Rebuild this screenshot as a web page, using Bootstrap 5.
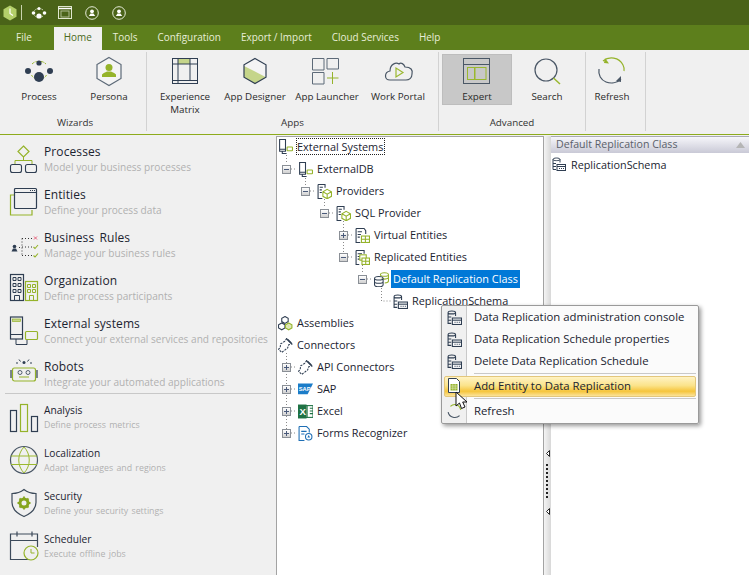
<!DOCTYPE html>
<html lang="en">
<head>
<meta charset="utf-8">
<title>Bizagi Studio</title>
<link href="https://cdn.jsdelivr.net/npm/bootstrap@5.3.0/dist/css/bootstrap.min.css" rel="stylesheet">
<script src="https://cdn.jsdelivr.net/npm/bootstrap@5.3.0/dist/js/bootstrap.bundle.min.js"></script>
<style>
html,body{height:100%;overflow:hidden;}
body{font-family:"Open Sans","Noto Sans",sans-serif;font-size:11px;background:#f0f0f0;color:#222;}
svg{display:block;flex:none;overflow:visible;}
.app-shell{width:749px;height:575px;position:relative;overflow:hidden;}
.title-strip{height:25px;background:#4a6318;padding-left:3px;}
.title-sep{width:1px;height:15px;background:#c9d3ae;margin-left:4px;}
.ti-a{margin-left:9px;}
.ti-b{margin-left:11px;}
.ti-c{margin-left:13px;}
.tab-strip{height:25px;background:#5d7f1c;padding-left:6px;}
.tab-link{display:block;padding:5px 10px 0;height:24px;line-height:14px;color:#e8eed8;font-size:9.95px;text-decoration:none;}
.tab-first{margin-right:12px;}
.tab-home{background:#f0f0f0;color:#4b6a1c;margin-top:2px;height:23px;padding-top:3px;}
.tab-tools{margin-left:1px;}
.ribbon-bar{height:84px;background:#f0f0f0;padding-left:4px;}
.ribbon-group{height:79px;margin-top:2px;border-right:1px solid #d2d2d2;position:relative;}
.ribbon-wiz{width:143px;}
.ribbon-apps{width:292px;padding-left:3px;}
.ribbon-adv{width:147px;padding-left:3px;}
.ribbon-ref{width:60px;padding-left:2px;}
.ribbon-btn{width:70px;height:51px;margin-top:2px;padding-top:2px;text-align:center;font-size:9.8px;line-height:13px;color:#2a2a2a;}
.ribbon-btn svg{margin:0 auto 2px;}
.ribbon-narrow{width:48px;}
.ribbon-on{background:#c8c8c8;border:1px solid #bdbdbd;padding-top:1px;}
.shift-1{margin-left:1px;}
.shift-2{margin-left:2px;}
.group-name{position:absolute;left:0;right:0;bottom:1px;text-align:center;font-size:9.8px;line-height:14px;color:#333;}
.accent-line{height:1px;background:#8dab1c;}
.work-area{height:440px;}
.side-nav{width:276px;padding-top:6px;background:#f0f0f0;}
.side-item{height:43px;padding:3px 0 0 9px;gap:5px;}
.side-title{font-size:12px;line-height:16px;color:#1c2430;letter-spacing:.1px;white-space:nowrap;}
.title-wide{word-spacing:2px;}
.side-sub{font-size:10.1px;line-height:14px;color:#b1b1b1;white-space:nowrap;}
.side-last{height:37px;}
.side-rule{height:1px;background:#c8c8c8;margin:0 5px 5px 5px;}
.side-minor .side-title{font-size:10.2px;letter-spacing:0;}
.side-minor .side-sub{font-size:8.8px;word-spacing:1px;}
.tree-box{width:268px;margin-top:1px;background:#fff;border:1px solid #a3a3a3;border-bottom:0;position:relative;}
.link-layer{position:absolute;left:-1px;top:-1px;}
.tree-line{position:relative;height:22px;font-size:10.9px;color:#1a2330;white-space:nowrap;}
.tree-top{height:18px;margin-bottom:3px;}
.lvl-0{padding-left:1px;}
.lvl-1{padding-left:5px;}
.lvl-2{padding-left:24px;}
.lvl-3{padding-left:43px;}
.lvl-4{padding-left:62px;}
.lvl-5{padding-left:81px;}
.lvl-6{padding-left:100px;}
.exp-box{width:9px;height:9px;margin-right:7px;flex:none;border:1px solid #8a8f96;background:linear-gradient(#fff,#d0d0d0);position:relative;}
.exp-box::before{content:"";position:absolute;left:1px;right:1px;top:3px;height:1px;background:#4a5a7a;}
.exp-plus::after{content:"";position:absolute;top:1px;bottom:1px;left:3px;width:1px;background:#4a5a7a;}
.exp-none{visibility:hidden;}
.tree-text{padding:0 2px;margin-left:2px;line-height:18px;}
.tree-focus{border:1px dotted #222;line-height:15px;height:17px;margin-left:3px;padding:0 1px 0 0;}
.tree-sel{background:#0078d7;color:#fff;}
.split-bar{width:7px;margin-top:1px;background:linear-gradient(90deg,#f4f4f4,#d8d8d8);position:relative;}
.split-mark{position:absolute;left:2px;}
.split-a{top:314px;}
.split-b{top:372px;}
.split-dots{position:absolute;left:2px;top:328px;width:2px;height:36px;background:repeating-linear-gradient(#222 0 2px,transparent 2px 4px);}
.detail-pane{flex:1;margin-top:1px;background:#fff;}
.detail-head{height:17px;padding:0 4px 0 5px;background:linear-gradient(#f6f6fa,#c9c9d6);color:#5a5f6a;font-size:10.6px;border-top:1px solid #a9a9b5;}
.detail-line{height:20px;padding:3px 0 0 1px;gap:5px;font-size:10.8px;color:#1a2330;margin-top:1px;}
.menu-pop{position:absolute;display:block;left:441px;top:305px;width:258px;height:119px;min-width:0;padding:0 2px;margin:0;border:1px solid #9a9a9a;border-radius:2px;font-size:11.35px;color:#1a2330;box-shadow:2px 2px 4px rgba(0,0,0,.4);background:linear-gradient(90deg,#f0f0f0 24px,#c9c9c9 24px,#c9c9c9 25px,#fbfbfb 25px);}
.menu-line{height:22px;padding:0 0 0 3px;color:#1a2330;}
.menu-icon{width:27px;flex:none;}
.menu-rule{height:1px;margin:1px 0 2px 30px;background:#c9c9c9;opacity:1;border:0;}
.menu-rule-b{margin-bottom:1px;}
.menu-hot{height:21px;background:linear-gradient(#fff3c4,#fbe38a 45%,#f6c53c 75%,#fbe39a);border:1px solid #e3c77c;border-radius:2px;padding:0 0 2px 2px;}
.cursor-mark{position:absolute;left:455px;top:391px;z-index:1001;}
</style>
</head>
<body>
<svg width="0" height="0" class="position-absolute">
<defs>
<symbol id="sys" viewBox="0 0 14 14"><path d="M1.500.5h5.500v11H1.500zM2 9.500h4.500M4 11.500v2h4" fill="none" stroke="#2f3e52"/><rect x="8.500" y="7.500" width="5" height="3.500" rx=".5" fill="#fff" stroke="#95b32a"/></symbol>
<symbol id="sch" viewBox="0 0 14 14"><path d="M1 2.500c0-2 7-2 7 0M1 2.500v10h3M8 2.500v3M1 2.500c0 1.500 7 1.500 7 0M1 6.500h3M1 9.500h3" fill="none" stroke="#2f3e52"/><rect x="5" y="7.500" width="8.500" height="6" fill="#fff" stroke="#2f3e52"/><path d="M5 9.500h8.500" stroke="#2f3e52"/><path d="M7 11.500h5" stroke="#2f3e52" stroke-dasharray="1 1"/></symbol>
<symbol id="prv" viewBox="0 0 14 14"><path d="M1 .5h6.500v3M1 .5v13h4M2.500 3h3M2.500 5.500h2M2.500 8h2" fill="none" stroke="#2f3e52"/><path d="M9.500 5l4 2.200v4.300l-4 2.300-4-2.300V7.200zM5.500 7.200l4 2.300 4-2.300M9.500 9.500v4.300" fill="#fff" stroke="#95b32a"/></symbol>
<symbol id="ent" viewBox="0 0 14 14"><path d="M1 .5h7.500l1.500 2v3M1 .5v13h4M2.500 3.500h4M2.500 6h3M2.500 8.500h2" fill="none" stroke="#2f3e52"/><rect x="6" y="7.500" width="7.500" height="6" fill="#fff" stroke="#95b32a"/><path d="M6 10.500h7.500M9.700 7.500v6" stroke="#95b32a"/></symbol>
<symbol id="rep" viewBox="0 0 14 14"><path d="M1 .5h7.500v3M1 .5v13h3M2.500 3.500h4M2.500 6h2M2.500 8.500h2" fill="none" stroke="#2f3e52"/><rect x="4.500" y="4.500" width="6" height="5" fill="#fff" stroke="#95b32a"/><rect x="6.500" y="7.500" width="7" height="6" fill="#fff" stroke="#95b32a"/><path d="M6.500 10.500h7M10 7.500v6" stroke="#95b32a"/></symbol>
<symbol id="cyl" viewBox="0 0 14 14"><path d="M6 2.500c0-2.500 7.500-2.500 7.500 0v6c0 1-1.500 1.600-3.500 1.800M6 2.500c0 2 7.500 2 7.500 0M6.500 5.500c2 1.300 5 1.300 7 0" fill="#fff" stroke="#95b32a"/><path d="M.5 6c0-2.500 8-2.500 8 0v6c0 2.500-8 2.500-8 0zM.5 6c0 2 8 2 8 0M.5 9c0 2 8 2 8 0" fill="#fff" stroke="#2f3e52"/></symbol>
<symbol id="asm" viewBox="0 0 14 14"><path d="M6.500.5l3 1.700v3l-3 1.700-3-1.700v-3zM3.500 6.500l3 1.700v3l-3 1.700-3-1.700v-3z" fill="#fff" stroke="#2f3e52"/><path d="M10 6.500l3 1.700v3l-3 1.700-3-1.700v-3z" fill="#dfe8b8" stroke="#95b32a"/><path d="M10 9.500h.1" stroke="#95b32a" stroke-width="2"/></symbol>
<symbol id="plg" viewBox="0 0 14 14"><path d="M8 .5l5 5-3 .8-1 3-4 3-1.500 1.200-3-3 1.500-1.500.5-3.500 4-2.500z" fill="#fff" stroke="#2f3e52" stroke-dasharray="2 1"/><path d="M9 1.500l3.500 3.500" stroke="#2f3e52" stroke-width="1.500"/></symbol>
<symbol id="sap" viewBox="0 0 14 14"><path d="M0 1.500h14l-5 10H0z" fill="#1b7cc8"/><text x=".6" y="8.500" font-size="5.400" font-weight="700" font-family="Liberation Sans,sans-serif" fill="#fff">SAP</text></symbol>
<symbol id="xls" viewBox="0 0 14 14"><rect x="5" y="1.500" width="9" height="11" fill="#fff" stroke="#1f7244"/><path d="M8.500 1.500v11M11 4h3M11 6.500h3M11 9h3" stroke="#1f7244"/><rect y=".5" width="8" height="13" fill="#1f7244"/><text x="1.300" y="10.300" font-size="9" font-weight="700" font-family="Liberation Sans,sans-serif" fill="#fff">X</text></symbol>
<symbol id="frm" viewBox="0 0 14 14"><path d="M1 .5h7l2.500 2.500v3M1 .5v13h5" fill="#fff" stroke="#1f6fb5"/><path d="M3 5h5M3 7.500h3" stroke="#1f6fb5"/><circle cx="10" cy="10" r="3" fill="#fff" stroke="#1f6fb5"/><path d="M10 8.500l1.300 2.300H8.700z" fill="#1f6fb5"/></symbol>
</defs>
</svg>

<div class="app-shell d-flex flex-column">
  <div class="title-strip d-flex align-items-center">
    <svg width="14" height="16" viewBox="0 0 14 16"><path d="M7 .5l6.500 3.700v7.600L7 15.500.5 11.800V4.200z" fill="#b4cf6a"/><path d="M7 3.500v5l3 2" fill="none" stroke="#fff" stroke-width="1.200"/></svg>
    <div class="title-sep"></div>
    <svg class="ti-a" width="16" height="12" viewBox="0 0 16 12"><path d="M3.500 3.500c2-2.500 7-2.500 9 0M3.500 8.500c2 2.500 7 2.500 9 0" fill="none" stroke="#dfe6cd" stroke-dasharray="1.500 1"/><circle cx="8" cy="1.500" r="1.500" fill="#fff"/><circle cx="2.500" cy="6" r="1.800" fill="#fff"/><circle cx="13.500" cy="6" r="1.800" fill="#fff"/><circle cx="8" cy="9" r="2.600" fill="#fff"/></svg>
    <svg class="ti-b" width="14" height="13" viewBox="0 0 14 13"><rect x=".5" y=".5" width="13" height="12" fill="none" stroke="#dfe6cd"/><path d="M.5 2.500h13" stroke="#fff" stroke-width="1.500"/><rect x="3" y="5" width="8" height="6" fill="none" stroke="#aebb90"/></svg>
    <svg class="ti-c" width="14" height="14" viewBox="0 0 14 14"><circle cx="7" cy="7" r="6.300" fill="none" stroke="#e6ecd8"/><circle cx="7" cy="5.300" r="1.900" fill="#fff"/><path d="M3.800 10h6.400L8.500 7.500h-3z" fill="#fff"/></svg>
    <svg class="ti-c" width="14" height="14" viewBox="0 0 14 14"><circle cx="7" cy="7" r="6.300" fill="none" stroke="#e6ecd8"/><circle cx="7" cy="5.300" r="1.900" fill="#fff"/><path d="M3.800 10h6.400L8.500 7.500h-3z" fill="#fff"/></svg>
  </div>

  <nav class="tab-strip nav flex-nowrap align-items-start">
    <a class="tab-link tab-first" href="#">File</a>
    <a class="tab-link tab-home" href="#">Home</a>
    <a class="tab-link tab-tools" href="#">Tools</a>
    <a class="tab-link" href="#">Configuration</a>
    <a class="tab-link" href="#">Export / Import</a>
    <a class="tab-link" href="#">Cloud Services</a>
    <a class="tab-link" href="#">Help</a>
  </nav>

  <div class="ribbon-bar d-flex">
    <div class="ribbon-group ribbon-wiz d-flex">
      <div class="ribbon-btn"><svg width="32" height="32" viewBox="0 0 32 32"><path d="M9 8c2-2 4-2.500 5-2.500M18 5.500c1 0 3 .5 5 2.500M8.500 19c1 2 2.500 3 4 3.500M23.500 19c-1 2-2.500 3-4 3.500" fill="none" stroke="#9ab82f" stroke-dasharray="3 1"/><circle cx="16" cy="7" r="2.600" fill="#2f3e52"/><circle cx="5" cy="15" r="3" fill="#2f3e52"/><circle cx="27" cy="15" r="3" fill="#2f3e52"/><circle cx="16" cy="21" r="5" fill="#2f3e52"/></svg>Process</div>
      <div class="ribbon-btn"><svg width="32" height="32" viewBox="0 0 32 32"><path d="M16 1.500l12 7v14l-12 7-12-7v-14z" fill="#f4f4f4" stroke="#5d6a78" stroke-width="1.200"/><circle cx="16" cy="11.500" r="3.500" fill="#95b32a"/><path d="M9 21h14v-2.500c-2-2-4-2.500-5-3h-4c-1 .5-3 1-5 3z" fill="#95b32a"/></svg>Persona</div>
      <div class="group-name">Wizards</div>
    </div>
    <div class="ribbon-group ribbon-apps d-flex">
      <div class="ribbon-btn"><svg width="32" height="32" viewBox="0 0 32 32"><rect x="3.500" y="2.500" width="25" height="25" fill="none" stroke="#2f3e52"/><rect x="9" y="3" width="12" height="5" fill="#c5d58a"/><path d="M3.500 8h25M3.500 24.500h25M9 2.500v25M21 2.500v22" fill="none" stroke="#2f3e52"/></svg>Experience Matrix</div>
      <div class="ribbon-btn"><svg width="32" height="32" viewBox="0 0 32 32"><path d="M16 2.500l11 6.300v12.400L16 27.500 5 21.200V8.800z" fill="#f4f4f4"/><path d="M5 10v11.200l11 6.300 11-6.300z" fill="#c5d58a"/><path d="M16 2.500l11 6.300v12.400L16 27.500 5 21.200V8.800z" fill="none" stroke="#2f3e52" stroke-width="1.200"/></svg>App Designer</div>
      <div class="ribbon-btn shift-2"><svg width="32" height="32" viewBox="0 0 32 32"><path d="M1.500 2.500h11.500v11.500H1.500zM16 2.500h11.500V13H16zM1.500 16.500h11.500V28H1.500z" fill="none" stroke="#5d6a78"/><path d="M21.500 16v12M16 22h11.500" stroke="#95b32a"/></svg>App Launcher</div>
      <div class="ribbon-btn shift-1"><svg width="32" height="32" viewBox="0 0 32 32"><path d="M8 24c-6 0-6-8 0-9 0-7 6-9 9-7 2-2 5 0 6 3 6 0 8 3 7 7 0 4-3 6-6 6z" fill="none" stroke="#4a5766" stroke-width="1.200"/><path d="M14 12v9l7-4.500z" fill="none" stroke="#9ab82f" stroke-width="1.200"/></svg>Work Portal</div>
      <div class="group-name">Apps</div>
    </div>
    <div class="ribbon-group ribbon-adv d-flex">
      <div class="ribbon-btn ribbon-on"><svg width="32" height="32" viewBox="0 0 32 32"><rect x="2.500" y="2.500" width="26" height="25" fill="none" stroke="#4a5766"/><path d="M2.500 8.500h26" stroke="#4a5766"/><rect x="6.500" y="11.500" width="7" height="12" fill="none" stroke="#9ab82f"/><rect x="14" y="11.500" width="11" height="12" fill="none" stroke="#9ab82f"/></svg>Expert</div>
      <div class="ribbon-btn"><svg width="32" height="32" viewBox="0 0 32 32"><circle cx="15" cy="14" r="11" fill="none" stroke="#4a5766" stroke-width="1.200"/><path d="M22.500 22l6.500 6" stroke="#9ab82f" stroke-width="1.500"/></svg>Search</div>
      <div class="group-name">Advanced</div>
    </div>
    <div class="ribbon-group ribbon-ref d-flex">
      <div class="ribbon-btn ribbon-narrow"><svg width="32" height="32" viewBox="0 0 32 32"><path d="M7 5c6-5 16-4 20 4 1 2 1.500 4 1 6" fill="none" stroke="#95b32a" stroke-width="1.200"/><path d="M9 2l-1 5 5 .5z" fill="#95b32a"/><path d="M3 13c-1 6 2 11 7 13 5 2 11 1 15-3" fill="none" stroke="#4a5766" stroke-width="1.200"/><path d="M25 20v6l-5-1z" fill="#4a5766"/></svg>Refresh</div>
    </div>
  </div>
  <div class="accent-line"></div>

  <div class="work-area d-flex">
    <aside class="side-nav">
      <div class="side-item d-flex"><svg width="30" height="30" viewBox="0 0 30 30"><path d="M14.500 2l5.500 5.500-5.500 5.500L9 7.500z" fill="none" stroke="#95b32a" stroke-width="1.200"/><path d="M14.500 13v3.500M6 20v-3.500h17V20" fill="none" stroke="#95b32a"/><rect x="1.500" y="20.500" width="11" height="8" rx="2" fill="none" stroke="#2f3e52" stroke-width="1.100"/><rect x="16.500" y="20.500" width="11" height="8" rx="2" fill="none" stroke="#2f3e52" stroke-width="1.100"/></svg><div><div class="side-title">Processes</div><div class="side-sub">Model your business processes</div></div></div>
      <div class="side-item d-flex"><svg width="30" height="30" viewBox="0 0 30 30"><path d="M5 8H1.500v20h21.500v-5" fill="none" stroke="#95b32a" stroke-width="1.200"/><rect x="5.500" y="1.500" width="22" height="20" rx="1" fill="#f0f0f0" stroke="#2f3e52" stroke-width="1.200"/><path d="M5.500 5.500h22" stroke="#2f3e52"/><path d="M21 3.500h5" stroke="#2f3e52" stroke-dasharray="1 1"/></svg><div><div class="side-title">Entities</div><div class="side-sub">Define your process data</div></div></div>
      <div class="side-item d-flex"><svg width="30" height="30" viewBox="0 0 30 30"><circle cx="5.500" cy="16.500" r="1.800" fill="#2f3e52"/><path d="M2.500 21.500h6L7 18.500H4z" fill="#2f3e52"/><path d="M10 17.500h3M13 8.500v17M13 8.500h10M13 17h10M13 25.500h10" fill="none" stroke="#333" stroke-dasharray="1 2"/><path d="M25 6.500l3 3M28 6.500l-3 3" stroke="#e8607a"/><path d="M24.500 17l1.500 1.500 3-3.500M24.500 25.500l1.500 1.500 3-3.500" fill="none" stroke="#95b32a" stroke-width="1.100"/></svg><div><div class="side-title title-wide">Business Rules</div><div class="side-sub">Manage your business rules</div></div></div>
      <div class="side-item d-flex"><svg width="30" height="30" viewBox="0 0 30 30"><rect x="1.500" y="1.500" width="13" height="26" fill="none" stroke="#2f3e52" stroke-width="1.200"/><path d="M4 4.500h3v3H4zM9 4.500h3v3H9zM4 10.500h3v3H4zM9 10.500h3v3H9zM4 16.500h3v3H4zM9 16.500h3v3H9zM5.500 27.500v-5h5v5" fill="none" stroke="#2f3e52"/><rect x="16.500" y="8.500" width="12" height="19" fill="none" stroke="#95b32a" stroke-width="1.200"/><path d="M18.500 11.500h3v3h-3zM23.500 11.500h3v3h-3zM18.500 16.500h3v3h-3zM23.500 16.500h3v3h-3zM20.500 27.500v-5h4v5" fill="none" stroke="#95b32a"/></svg><div><div class="side-title">Organization</div><div class="side-sub">Define process participants</div></div></div>
      <div class="side-item d-flex"><svg width="30" height="30" viewBox="0 0 30 30"><rect x="1.500" y="1" width="12" height="22" fill="none" stroke="#2f3e52" stroke-width="1.200"/><rect x="3.500" y="3" width="8" height="2.500" fill="#c5d58a" stroke="#95b32a" stroke-width=".7"/><path d="M1.500 18.500h12M7 23v5.500h11V24" fill="none" stroke="#2f3e52"/><rect x="16.500" y="15.500" width="12" height="8" rx="1" fill="none" stroke="#95b32a" stroke-width="1.200"/></svg><div><div class="side-title">External systems</div><div class="side-sub">Connect your external services and repositories</div></div></div>
      <div class="side-item side-last d-flex"><svg width="30" height="30" viewBox="0 0 30 30"><circle cx="15" cy="3.500" r="1.500" fill="#2f3e52"/><path d="M10 .5l1.500 2M20 .5l-1.500 2M7 4h2M21 4h2" stroke="#2f3e52"/><rect x="3.500" y="9" width="23" height="13" rx="2" fill="none" stroke="#95b32a" stroke-width="1.200"/><path d="M2 11v8M28 11v8" stroke="#2f3e52" stroke-width="1.200"/><circle cx="11" cy="13.500" r="2" fill="none" stroke="#2f3e52" stroke-width=".8"/><circle cx="19" cy="13.500" r="2" fill="none" stroke="#2f3e52" stroke-width=".8"/><path d="M10 18h10" stroke="#95b32a"/></svg><div><div class="side-title">Robots</div><div class="side-sub">Integrate your automated applications</div></div></div>
      <div class="side-rule"></div>
      <div class="side-minor">
        <div class="side-item d-flex"><svg width="30" height="30" viewBox="0 0 30 30"><rect x="1.500" y="8.500" width="6" height="21" fill="none" stroke="#2f3e52" stroke-width="1.200"/><rect x="11.500" y="2.500" width="7" height="27" fill="none" stroke="#95b32a" stroke-width="1.200"/><rect x="22.500" y="14.500" width="6" height="15" fill="none" stroke="#2f3e52" stroke-width="1.200"/></svg><div><div class="side-title">Analysis</div><div class="side-sub">Define process metrics</div></div></div>
        <div class="side-item d-flex"><svg width="30" height="30" viewBox="0 0 30 30"><circle cx="15" cy="15" r="13.500" fill="none" stroke="#4a5766" stroke-width="1.200"/><path d="M2 11h26M2 19.500h26M15 2c-7 7-7 19 0 26M15 2c7 7 7 19 0 26" fill="none" stroke="#9ab82f"/></svg><div><div class="side-title">Localization</div><div class="side-sub">Adapt languages and regions</div></div></div>
        <div class="side-item d-flex"><svg width="30" height="30" viewBox="0 0 30 30"><path d="M15 1.500c3 2.500 7 4 12 4v9c0 7-5 11-12 14-7-3-12-7-12-14v-9c5 0 9-1.500 12-4z" fill="none" stroke="#3c4a5a" stroke-width="1.200"/><circle cx="15" cy="15" r="4" fill="none" stroke="#86a51f" stroke-width="3"/><path d="M15 8.500v3M15 18.500v3M8.500 15h3M18.500 15h3M10.500 10.500l2 2M17.500 17.500l2 2M19.500 10.500l-2 2M12.500 17.500l-2 2" stroke="#86a51f" stroke-width="1.800"/></svg><div><div class="side-title">Security</div><div class="side-sub">Define your security settings</div></div></div>
        <div class="side-item d-flex"><svg width="30" height="30" viewBox="0 0 30 30"><path d="M23 28.500H1.500V3h27v13M1.500 9.500h27M8 .5v5M23 .5v5" fill="none" stroke="#3c4a5a" stroke-width="1.200"/><circle cx="22" cy="22" r="7" fill="#f0f0f0" stroke="#95b32a" stroke-width="1.200"/><path d="M22 18v4h3.500" fill="none" stroke="#95b32a"/></svg><div><div class="side-title">Scheduler</div><div class="side-sub">Execute offline jobs</div></div></div>
      </div>
    </aside>

    <section class="tree-box">
      <svg class="link-layer" width="268" height="439" viewBox="276 136 268 439"><g fill="none" stroke="#8a8a8a" stroke-dasharray="1 2">
        <path d="M286.500 155v9M291 169h6"/><path d="M305.500 178v8M310 191h6"/><path d="M324.500 199v9M329 213h6"/><path d="M343.500 221v31M348 235h6M348 257h6"/><path d="M362.500 265v9M367 279h5"/><path d="M381.500 288v13h10"/>
        <path d="M286.500 353v80M291 367h5M291 389h5M291 411h5M291 433h5"/></g></svg>
      <div class="tree-line tree-top lvl-0 d-flex align-items-center"><svg width="15" height="15"><use href="#sys"/></svg><span class="tree-focus">External Systems</span></div>
      <div class="tree-line lvl-1 d-flex align-items-center"><span class="exp-box"></span><svg width="15" height="15"><use href="#sys"/></svg><span class="tree-text">ExternalDB</span></div>
      <div class="tree-line lvl-2 d-flex align-items-center"><span class="exp-box"></span><svg width="15" height="15"><use href="#prv"/></svg><span class="tree-text">Providers</span></div>
      <div class="tree-line lvl-3 d-flex align-items-center"><span class="exp-box"></span><svg width="15" height="15"><use href="#prv"/></svg><span class="tree-text">SQL Provider</span></div>
      <div class="tree-line lvl-4 d-flex align-items-center"><span class="exp-box exp-plus"></span><svg width="15" height="15"><use href="#ent"/></svg><span class="tree-text">Virtual Entities</span></div>
      <div class="tree-line lvl-4 d-flex align-items-center"><span class="exp-box"></span><svg width="15" height="15"><use href="#rep"/></svg><span class="tree-text">Replicated Entities</span></div>
      <div class="tree-line lvl-5 d-flex align-items-center"><span class="exp-box"></span><svg width="15" height="15"><use href="#cyl"/></svg><span class="tree-text tree-sel">Default Replication Class</span></div>
      <div class="tree-line lvl-6 d-flex align-items-center"><span class="exp-box exp-none"></span><svg width="15" height="15"><use href="#sch"/></svg><span class="tree-text">ReplicationSchema</span></div>
      <div class="tree-line lvl-0 d-flex align-items-center"><svg width="15" height="15"><use href="#asm"/></svg><span class="tree-text">Assemblies</span></div>
      <div class="tree-line lvl-0 d-flex align-items-center"><svg width="15" height="15"><use href="#plg"/></svg><span class="tree-text">Connectors</span></div>
      <div class="tree-line lvl-1 d-flex align-items-center"><span class="exp-box exp-plus"></span><svg width="15" height="15"><use href="#plg"/></svg><span class="tree-text">API Connectors</span></div>
      <div class="tree-line lvl-1 d-flex align-items-center"><span class="exp-box exp-plus"></span><svg width="15" height="15"><use href="#sap"/></svg><span class="tree-text">SAP</span></div>
      <div class="tree-line lvl-1 d-flex align-items-center"><span class="exp-box exp-plus"></span><svg width="15" height="15"><use href="#xls"/></svg><span class="tree-text">Excel</span></div>
      <div class="tree-line lvl-1 d-flex align-items-center"><span class="exp-box exp-plus"></span><svg width="15" height="15"><use href="#frm"/></svg><span class="tree-text">Forms Recognizer</span></div>
    </section>

    <div class="split-bar">
      <svg class="split-mark split-a" width="4" height="7" viewBox="0 0 4 7"><path d="M3.500.5v6L.5 3.500z" fill="#fff" stroke="#222"/></svg>
      <div class="split-dots"></div>
      <svg class="split-mark split-b" width="4" height="7" viewBox="0 0 4 7"><path d="M3.500.5v6L.5 3.500z" fill="#fff" stroke="#222"/></svg>
    </div>

    <section class="detail-pane">
      <div class="detail-head d-flex align-items-center justify-content-between"><span>Default Replication Class</span><svg width="9" height="6" viewBox="0 0 9 6"><path d="M4.500 0l4.500 6H0z" fill="#b5b5b5"/></svg></div>
      <div class="detail-line d-flex"><svg width="14" height="14"><use href="#sch"/></svg><span>ReplicationSchema</span></div>
    </section>
  </div>

  <div class="dropdown-menu show menu-pop">
    <div class="menu-line d-flex align-items-center"><div class="menu-icon"><svg width="15" height="15"><use href="#sch"/></svg></div><span>Data Replication administration console</span></div>
    <div class="menu-line d-flex align-items-center"><div class="menu-icon"><svg width="15" height="15"><use href="#sch"/></svg></div><span>Data Replication Schedule properties</span></div>
    <div class="menu-line d-flex align-items-center"><div class="menu-icon"><svg width="15" height="15"><use href="#sch"/></svg></div><span>Delete Data Replication Schedule</span></div>
    <hr class="menu-rule">
    <div class="menu-line menu-hot d-flex align-items-center"><div class="menu-icon"><svg width="14" height="15" viewBox="0 0 14 15"><path d="M1.500.5h8l3 3v11h-11z" fill="#fff" stroke="#2f3e52"/><rect x="3.500" y="6" width="7" height="6.500" fill="#95b32a"/><path d="M3.500 8h7M3.500 10.200h7M5.800 6v6.500M8.200 6v6.500" stroke="#e5edc6" stroke-width=".6"/></svg></div><span>Add Entity to Data Replication</span></div>
    <hr class="menu-rule menu-rule-b">
    <div class="menu-line d-flex align-items-center"><div class="menu-icon"><svg width="16" height="16" viewBox="0 0 14 14"><path d="M3 3c3-3 8-2 9 3" fill="none" stroke="#95b32a"/><path d="M1 8c1 5 7 6 10 3" fill="none" stroke="#4a5766"/></svg></div><span>Refresh</span></div>
  </div>

  <svg class="cursor-mark" width="16" height="22" viewBox="0 0 16 22"><path d="M1 1v14l3.500-3 2 5.500 3.500-1.500-2.300-5H12z" fill="#fff" stroke="#111" stroke-linejoin="round"/></svg>
</div>
</body>
</html>
